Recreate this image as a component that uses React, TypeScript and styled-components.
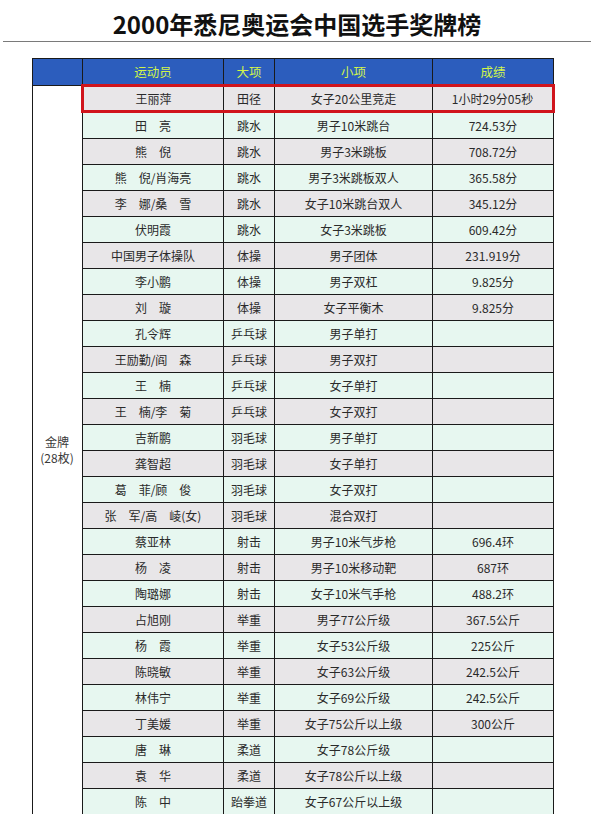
import React from 'react';
import styled, { createGlobalStyle } from 'styled-components';

const GlobalStyle = createGlobalStyle`
  html, body {
    margin: 0;
    padding: 0;
    background: #ffffff;
  }
  body {
    font-family: "Noto Sans CJK SC", "Noto Sans", sans-serif;
  }
`;

const Page = styled.div`
  width: 594px;
  height: 814px;
  overflow: hidden;
  background: #fff;
`;

const TitleBar = styled.header`
  height: 42px;
  margin: 0 3px;
  border-bottom: 1px solid #7a7a7a;
  display: flex;
  align-items: center;
  justify-content: center;
  box-sizing: border-box;
  padding-top: 6px;
`;

const Title = styled.h1`
  margin: 0;
  font-size: 24px;
  font-weight: 700;
  color: #111;
  line-height: 1;
`;

const TableWrap = styled.div`
  padding: 16px 0 0 32px;
`;

const Table = styled.table`
  border-collapse: collapse;
  table-layout: fixed;
  width: 521px;
  font-size: 12px;
  color: #2a2a2a;
`;

const HeadCell = styled.th`
  height: 25px;
  padding: 0;
  background: #2c5dbd;
  color: #d2f54a;
  font-weight: 400;
  font-size: 12.5px;
  border: 1px solid #1a1a1a;
  text-align: center;
`;

const Cell = styled.td<{ $shade: boolean; $mark?: 'left' | 'right' | 'mid' }>`
  height: ${(p) => (p.$mark ? '23px' : '25px')};
  padding: 0;
  text-align: center;
  white-space: pre;
  background: ${(p) => (p.$shade ? '#e8e6e8' : '#e7f7f0')};
  border: 1px solid #1a1a1a;
  ${(p) =>
    p.$mark
      ? `
    border-top: 3px solid #d0141c;
    border-bottom: 3px solid #d0141c;
  `
      : ''}
  ${(p) => (p.$mark === 'left' ? 'border-left: 3px solid #d0141c;' : '')}
  ${(p) => (p.$mark === 'right' ? 'border-right: 3px solid #d0141c;' : '')}
`;

const MedalCell = styled.td`
  background: #fff;
  border: 1px solid #1a1a1a;
  text-align: center;
  vertical-align: middle;
  color: #3a3a3a;
  font-size: 12px;
  line-height: 16px;
  padding: 0;
`;

type Row = [string, string, string, string];

const rows: Row[] = [
  ['王丽萍', '田径', '女子20公里竞走', '1小时29分05秒'],
  ['田　亮', '跳水', '男子10米跳台', '724.53分'],
  ['熊　倪', '跳水', '男子3米跳板', '708.72分'],
  ['熊　倪/肖海亮', '跳水', '男子3米跳板双人', '365.58分'],
  ['李　娜/桑　雪', '跳水', '女子10米跳台双人', '345.12分'],
  ['伏明霞', '跳水', '女子3米跳板', '609.42分'],
  ['中国男子体操队', '体操', '男子团体', '231.919分'],
  ['李小鹏', '体操', '男子双杠', '9.825分'],
  ['刘　璇', '体操', '女子平衡木', '9.825分'],
  ['孔令辉', '乒乓球', '男子单打', ''],
  ['王励勤/阎　森', '乒乓球', '男子双打', ''],
  ['王　楠', '乒乓球', '女子单打', ''],
  ['王　楠/李　菊', '乒乓球', '女子双打', ''],
  ['吉新鹏', '羽毛球', '男子单打', ''],
  ['龚智超', '羽毛球', '女子单打', ''],
  ['葛　菲/顾　俊', '羽毛球', '女子双打', ''],
  ['张　军/高　崚(女)', '羽毛球', '混合双打', ''],
  ['蔡亚林', '射击', '男子10米气步枪', '696.4环'],
  ['杨　凌', '射击', '男子10米移动靶', '687环'],
  ['陶璐娜', '射击', '女子10米气手枪', '488.2环'],
  ['占旭刚', '举重', '男子77公斤级', '367.5公斤'],
  ['杨　霞', '举重', '女子53公斤级', '225公斤'],
  ['陈晓敏', '举重', '女子63公斤级', '242.5公斤'],
  ['林伟宁', '举重', '女子69公斤级', '242.5公斤'],
  ['丁美媛', '举重', '女子75公斤以上级', '300公斤'],
  ['唐　琳', '柔道', '女子78公斤级', ''],
  ['袁　华', '柔道', '女子78公斤以上级', ''],
  ['陈　中', '跆拳道', '女子67公斤以上级', ''],
];

const App: React.FC = () => {
  return (
    <Page>
      <GlobalStyle />
      <TitleBar>
        <Title>2000年悉尼奥运会中国选手奖牌榜</Title>
      </TitleBar>
      <TableWrap>
        <Table>
          <colgroup>
            <col style={{ width: 50 }} />
            <col style={{ width: 141 }} />
            <col style={{ width: 51 }} />
            <col style={{ width: 158 }} />
            <col style={{ width: 121 }} />
          </colgroup>
          <thead>
            <tr>
              <HeadCell />
              <HeadCell>运动员</HeadCell>
              <HeadCell>大项</HeadCell>
              <HeadCell>小项</HeadCell>
              <HeadCell>成绩</HeadCell>
            </tr>
          </thead>
          <tbody>
            {rows.map((r, i) => {
              const shade = i % 2 === 0;
              const marked = i === 0;
              return (
                <tr key={i}>
                  {i === 0 && (
                    <MedalCell rowSpan={rows.length}>
                      金牌
                      <br />
                      (28枚)
                    </MedalCell>
                  )}
                  {r.map((text, j) => (
                    <Cell
                      key={j}
                      $shade={shade}
                      $mark={marked ? (j === 0 ? 'left' : j === 3 ? 'right' : 'mid') : undefined}
                    >
                      {text}
                    </Cell>
                  ))}
                </tr>
              );
            })}
          </tbody>
        </Table>
      </TableWrap>
    </Page>
  );
};

export default App;
